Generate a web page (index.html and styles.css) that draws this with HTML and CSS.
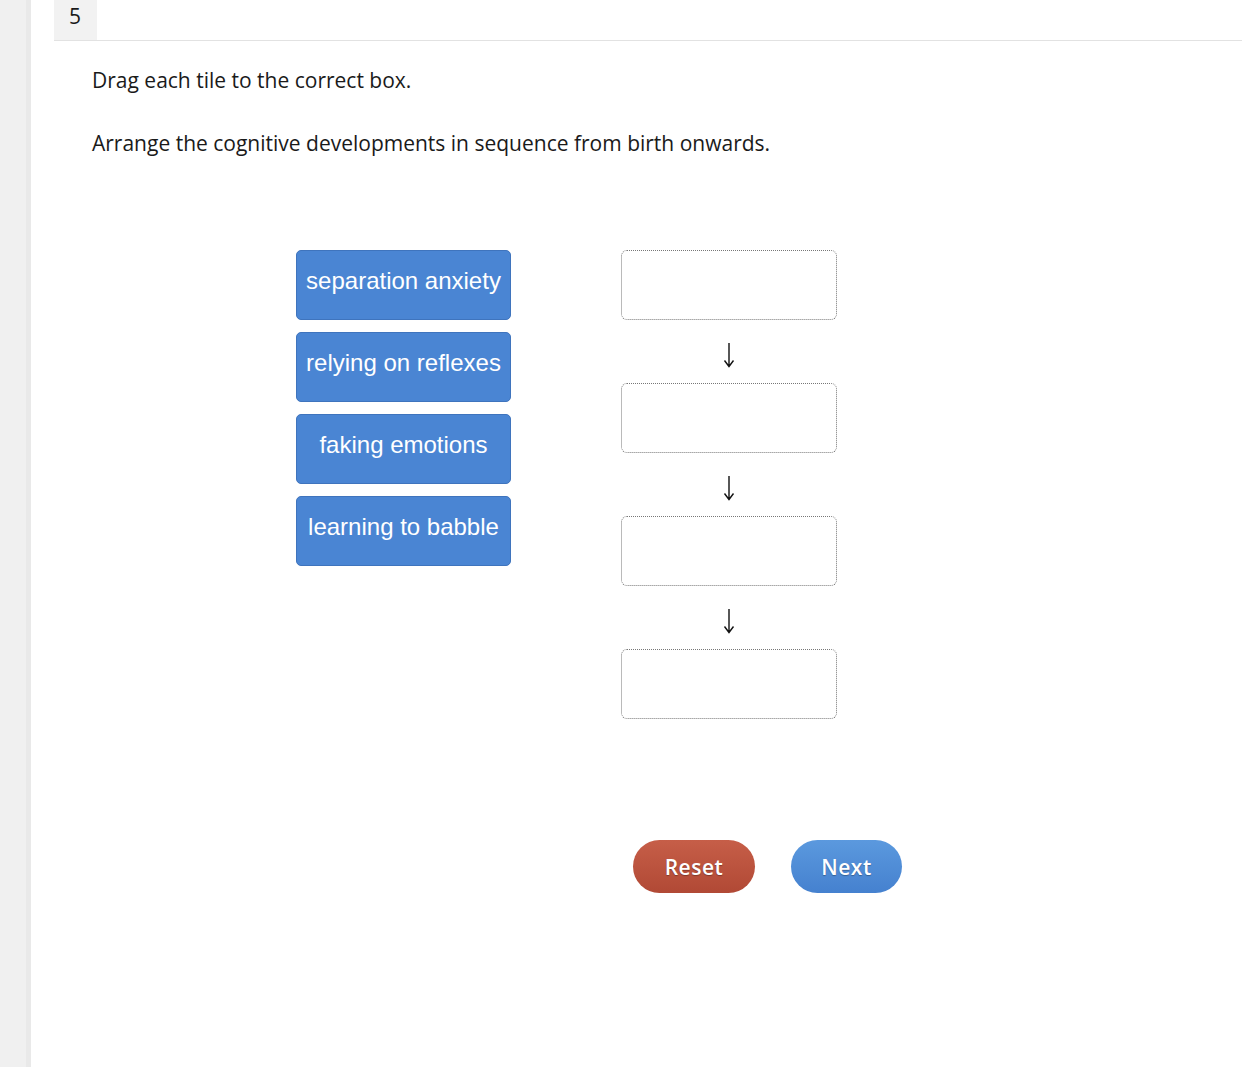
FILE: index.html
```html
<!DOCTYPE html>
<html lang="en">
<head>
  <meta charset="UTF-8">
  <title>Question 5</title>
  <link rel="stylesheet" href="styles.css">
</head>
<body>
  <div class="sidebar"></div>

  <div class="main">
    <div class="header">
      <div class="qnum">5</div>
    </div>

    <div class="content">
      <p class="prompt">Drag each tile to the correct box.</p>
      <p class="prompt">Arrange the cognitive developments in sequence from birth onwards.</p>

      <div class="board">
        <div class="tiles">
          <div class="tile">separation anxiety</div>
          <div class="tile">relying on reflexes</div>
          <div class="tile">faking emotions</div>
          <div class="tile">learning to babble</div>
        </div>

        <div class="targets">
          <div class="target"></div>
          <div class="arrow">
            <svg width="14" height="26" viewBox="0 0 14 26"><path d="M7 1 V24 M2.5 18.5 L7 24.5 L11.5 18.5" fill="none" stroke="#111" stroke-width="1.4"/></svg>
          </div>
          <div class="target"></div>
          <div class="arrow">
            <svg width="14" height="26" viewBox="0 0 14 26"><path d="M7 1 V24 M2.5 18.5 L7 24.5 L11.5 18.5" fill="none" stroke="#111" stroke-width="1.4"/></svg>
          </div>
          <div class="target"></div>
          <div class="arrow">
            <svg width="14" height="26" viewBox="0 0 14 26"><path d="M7 1 V24 M2.5 18.5 L7 24.5 L11.5 18.5" fill="none" stroke="#111" stroke-width="1.4"/></svg>
          </div>
          <div class="target"></div>
        </div>
      </div>

      <div class="actions">
        <button class="btn btn-reset">Reset</button>
        <button class="btn btn-next">Next</button>
      </div>
    </div>
  </div>
</body>
</html>
```

FILE: styles.css
```css
body {
  margin: 0;
  display: flex;
  min-height: 1067px;
  font-family: "Open Sans", sans-serif;
  color: #1a1a1a;
  background: #fff;
}

.sidebar {
  width: 26px;
  background: #f0f0f0;
  border-right: 5px solid #e9e9e9;
  flex-shrink: 0;
}

.main {
  flex: 1;
  padding-left: 23px;
}

.header {
  height: 40px;
  border-bottom: 1px solid #e2e2e2;
  display: flex;
}

.qnum {
  width: 43px;
  background: #f2f2f2;
  font-size: 21px;
  line-height: 32px;
  padding-left: 15px;
  box-sizing: border-box;
}

.content {
  padding-left: 38px;
}

.prompt {
  margin: 0;
  font-size: 21px;
  line-height: 30px;
}

.prompt:first-child {
  margin-top: 24px;
}

.prompt + .prompt {
  margin-top: 33px;
}

.board {
  display: flex;
  margin-top: 92px;
  padding-left: 204px;
}

.tiles {
  display: flex;
  flex-direction: column;
  gap: 12px;
}

.tile {
  width: 215px;
  height: 70px;
  box-sizing: border-box;
  background: #4a85d3;
  border: 1px solid #3f74bd;
  border-radius: 5px;
  color: #fff;
  font-family: "Liberation Sans", Arial, sans-serif;
  font-size: 24px;
  text-align: center;
  padding-top: 16px;
}

.targets {
  margin-left: 110px;
  display: flex;
  flex-direction: column;
  align-items: center;
}

.target {
  width: 216px;
  height: 70px;
  box-sizing: border-box;
  border: 1px dotted #777;
  border-radius: 6px;
}

.arrow {
  height: 63px;
  box-sizing: border-box;
  padding-top: 22px;
}

.arrow svg {
  display: block;
}

.actions {
  display: flex;
  gap: 36px;
  margin-top: 121px;
  padding-left: 541px;
}

.btn {
  height: 53px;
  border: none;
  border-radius: 27px;
  color: #fff;
  font-family: "Open Sans", sans-serif;
  font-size: 21px;
  font-weight: 600;
  letter-spacing: 0.5px;
  text-shadow: 0 1px 1px rgba(0, 0, 0, 0.3);
}

.btn-reset {
  width: 122px;
  background: linear-gradient(#c65e48, #b14935);
}

.btn-next {
  width: 111px;
  background: linear-gradient(#5b99de, #4581cf);
}
```
